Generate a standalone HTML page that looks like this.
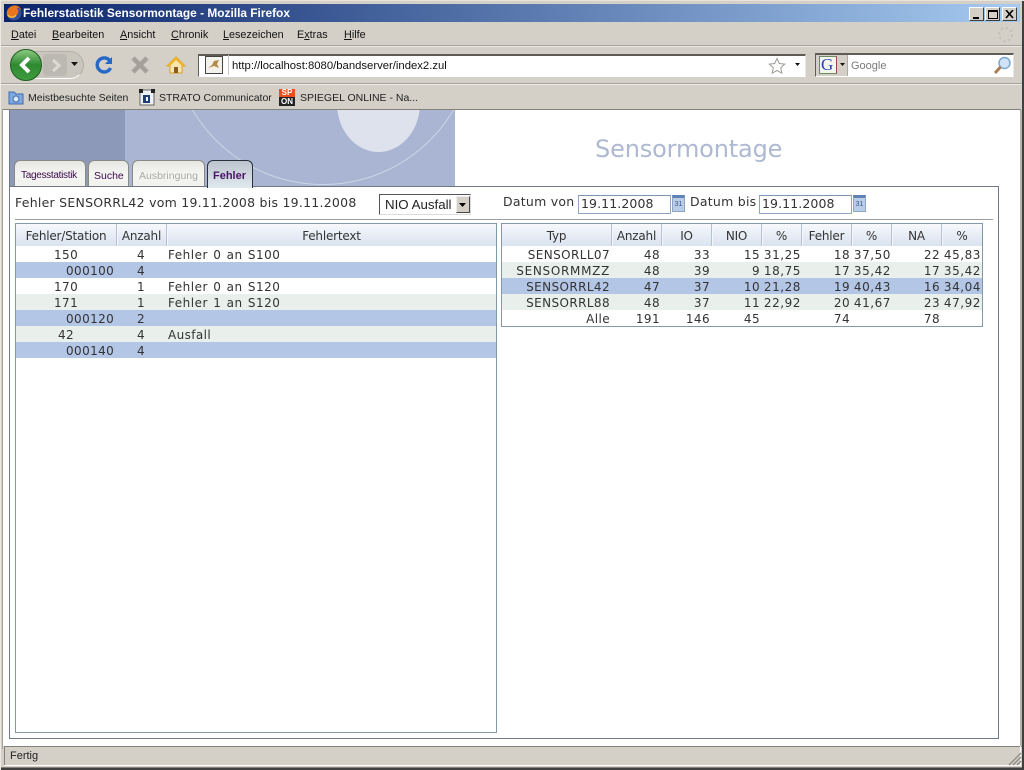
<!DOCTYPE html>
<html><head><meta charset="utf-8"><title>Fehlerstatistik Sensormontage - Mozilla Firefox</title>
<style>
html,body{margin:0;padding:0;background:#d4d0c8;}
body{position:relative;width:1024px;height:770px;overflow:hidden;font-family:"Liberation Sans",sans-serif;}
div,span,svg{position:absolute;box-sizing:border-box;}
.t{white-space:nowrap;line-height:16px;}
.m{font-size:10.8px;color:#111;top:27px;}
.m u{text-decoration:underline;}
.b{font-size:10.5px;color:#222;top:90px;}
.v{font-family:"DejaVu Sans",sans-serif;font-size:12px;color:#333;letter-spacing:.4px;margin-top:1px;}
.w{word-spacing:1px;letter-spacing:.5px;}
.n{letter-spacing:.55px;}
.h{font-size:12px;color:#333;text-align:center;top:228px;font-family:"DejaVu Sans",sans-serif;letter-spacing:-.2px;}
.r{text-align:right;}
.hs{top:224px;height:22px;background:#f4f7fb;border-left:1px solid #b6c2d4;width:2px;}
.tab{top:160px;height:27px;border:1px solid #8a8a84;border-bottom:0;border-radius:6px 6px 0 0;background:linear-gradient(#e6e6e2,#f5f5f2 50%,#f1f1ee);}
.tl{font-size:10.5px;top:168px;}
.dt{top:195px;height:19px;background:#fff;border:1px solid #8ea6c4;border-top-color:#7d95b5;}
.cal{top:195px;width:13px;height:17px;background:#b9cde8;border:1px solid #8ea6c4;border-top:3px solid #5f83b5;font:7px "Liberation Sans",sans-serif;color:#3b5b8c;text-align:center;line-height:13px;}
.wb{top:7px;width:15px;height:14px;background:#d4d0c8;border:1px solid;border-color:#fff #404040 #404040 #fff;}
.d{font-family:"DejaVu Sans",sans-serif;font-size:12.5px;color:#333;}
</style></head><body>
<!-- title bar -->
<div style="left:0;top:0;width:1024px;height:4px;background:#d4d0c8"></div>
<div style="left:4px;top:4px;width:1016px;height:18px;background:linear-gradient(90deg,#0a246a,#a6caf0)"></div>
<svg style="left:5px;top:4px" width="18" height="18" viewBox="0 0 18 18"><circle cx="9" cy="9" r="7.500" fill="#34509c"/><path d="M2 11C1 5 6 1 11 1.500c3 .5 5 3 5.500 5.500-1-2-3-3.500-5-3.500 2 2 2.500 4.500 1 6.500s-5 5-8 3.500C3.500 13.500 2.500 12 2 11z" fill="#e8761c"/><path d="M3 11c2 3 6 3 8 0" stroke="#f8c040" stroke-width="1.500" fill="none"/></svg>
<div class="t" style="left:23px;top:5px;font-size:11.9px;font-weight:bold;color:#fff">Fehlerstatistik Sensormontage - Mozilla Firefox</div>
<div class="wb" style="left:969px"><span style="left:3px;top:9px;width:6px;height:2px;background:#000"></span></div>
<div class="wb" style="left:985px"><span style="left:2px;top:2px;width:10px;height:9px;border:1px solid #000;border-top-width:2px"></span></div>
<div class="wb" style="left:1002px"><svg style="left:2px;top:2px" width="10" height="9"><path d="M1 0l7 8M8 0L1 8" stroke="#000" stroke-width="1.600"/></svg></div>
<!-- menu -->
<div class="t m" style="left:11px"><u>D</u>atei</div>
<div class="t m" style="left:52px"><u>B</u>earbeiten</div>
<div class="t m" style="left:120px"><u>A</u>nsicht</div>
<div class="t m" style="left:171px"><u>C</u>hronik</div>
<div class="t m" style="left:223px"><u>L</u>esezeichen</div>
<div class="t m" style="left:297px">E<u>x</u>tras</div>
<div class="t m" style="left:344px"><u>H</u>ilfe</div>
<svg style="left:997px;top:26px" width="17" height="17"><circle cx="8.500" cy="8.500" r="6.500" fill="none" stroke="#c2bfb8" stroke-width="2.200" stroke-dasharray="2.200 2.900"/></svg>
<div style="left:0;top:45px;width:1024px;height:1px;background:#a5a29b"></div>
<div style="left:0;top:46px;width:1024px;height:1px;background:#eeeae3"></div>
<!-- nav -->
<div style="left:12px;top:51px;width:72px;height:28px;border-radius:14px;background:#c9c6be;border:1px solid #b3b0a8;border-bottom-color:#fff"></div>
<div style="left:43px;top:54px;width:24px;height:22px;border-radius:4px;background:#bcb9b2"></div>
<svg style="left:10px;top:49px" width="33" height="33"><defs><linearGradient id="g" x1="0" y1="0" x2="0" y2="1"><stop offset="0" stop-color="#8fca84"/><stop offset=".5" stop-color="#2d8a30"/><stop offset="1" stop-color="#3f9c3e"/></linearGradient></defs><circle cx="16" cy="16" r="15.500" fill="url(#g)" stroke="#1f5e22"/><path d="M19 9l-7 7 7 7" fill="none" stroke="#fff" stroke-width="4"/></svg>
<svg style="left:49px;top:58px" width="14" height="15"><path d="M4 2l6 5.500-6 5.500" fill="none" stroke="#dddad3" stroke-width="3"/></svg>
<svg style="left:71px;top:62px" width="8" height="5"><path d="M0 0h7L3.500 4z" fill="#111"/></svg>
<svg style="left:95px;top:56px" width="18" height="19"><path d="M15 5A7 7 0 1 0 15.500 12" fill="none" stroke="#2468c8" stroke-width="3.400"/><path d="M10 8h7V1z" fill="#2468c8"/></svg>
<svg style="left:130px;top:55px" width="20" height="20"><path d="M3 3l14 14M17 3L3 17" stroke="#a3a199" stroke-width="4.500"/></svg>
<svg style="left:166px;top:56px" width="20" height="18"><path d="M10 1L1 10h3v7h12v-7h3z" fill="#f5e6b0" stroke="#d8a020"/><path d="M10 1L1 10h3L10 4l6 6h3z" fill="#f0b428"/><rect x="8" y="11" width="4" height="6" fill="#8a5a20"/></svg>
<div style="left:198px;top:54px;width:608px;height:23px;background:#fff;border:1px solid;border-color:#5f5c55 #e8e6e0 #fff #5f5c55;border-top-width:2px"></div>
<div style="left:205px;top:56px;width:18px;height:18px;background:#f3f1ec;border:1px solid #444"></div>
<svg style="left:207px;top:59px" width="14" height="12"><path d="M1 9l4-3 2-4 5-1-2 4 2 4-5-2z" fill="#b48a4a"/></svg>
<div style="left:228px;top:55px;width:1px;height:20px;background:#c8c6c0"></div>
<div class="t" style="left:232px;top:58px;font-size:11.3px;color:#111">http://localhost:8080/bandserver/index2.zul</div>
<svg style="left:768px;top:57px" width="18" height="18"><path d="M9 1.500l2.300 5 5.400.6-4 3.700 1.100 5.400L9 13.500l-4.800 2.700 1.100-5.400-4-3.700 5.400-.6z" fill="#fff" stroke="#9a9a94"/></svg>
<svg style="left:795px;top:63px" width="6" height="4"><path d="M0 0h5L2.500 3z" fill="#111"/></svg>
<div style="left:815px;top:53px;width:199px;height:24px;background:#fff;border:1px solid;border-color:#5f5c55 #e8e6e0 #fff #5f5c55;border-top-width:2px"></div>
<div style="left:816px;top:55px;width:32px;height:21px;background:#d4d0c8;border-right:1px solid #aaa"></div>
<div style="left:819px;top:56px;width:18px;height:18px;background:#f2f6ee;border:1px solid #6c8a5c;border-right-color:#a04050"></div>
<div class="t" style="left:821px;top:56px;font:17px/18px 'Liberation Serif',serif;color:#2a44b0">G</div>
<svg style="left:840px;top:63px" width="6" height="4"><path d="M0 0h5L2.500 3z" fill="#111"/></svg>
<div class="t" style="left:851px;top:58px;font-size:11px;color:#7a7a7a">Google</div>
<svg style="left:993px;top:56px" width="19" height="19"><circle cx="11.500" cy="7" r="5.500" fill="#cfe4f7" stroke="#7fa8cc" stroke-width="1.500"/><path d="M7.500 11l-5.500 6" stroke="#b07a50" stroke-width="3"/></svg>
<div style="left:0;top:83px;width:1024px;height:1px;background:#a5a29b"></div>
<div style="left:0;top:84px;width:1024px;height:1px;background:#f0ede6"></div>
<!-- bookmarks -->
<svg style="left:8px;top:90px" width="16" height="16"><path d="M1 2h5l2 2h7v10H1z" fill="#7ea8e0" stroke="#3f6cb0"/><circle cx="8" cy="9" r="3" fill="#dbe8fa" stroke="#3f6cb0"/></svg>
<div class="t b" style="left:28px">Meistbesuchte Seiten</div>
<svg style="left:139px;top:89px" width="16" height="17"><rect x="1" y="1" width="14" height="15" fill="#eef0f4" stroke="#666"/><rect x="0" y="0" width="4" height="4" fill="#222"/><rect x="12" y="0" width="4" height="4" fill="#222"/><rect x="4" y="6" width="7" height="8" fill="#1c3f78"/><rect x="7" y="8" width="2" height="4" fill="#fff"/></svg>
<div class="t b" style="left:159px">STRATO Communicator</div>
<div style="left:279px;top:89px;width:16px;height:8px;background:#e8501c;color:#fff;font:bold 8px/8px 'Liberation Sans',sans-serif;text-align:center">SP</div>
<div style="left:279px;top:97px;width:16px;height:9px;background:#222;color:#fff;font:bold 8px/9px 'Liberation Sans',sans-serif;text-align:center">ON</div>
<div class="t b" style="left:300px">SPIEGEL ONLINE - Na...</div>
<!-- content -->
<div style="left:3px;top:109px;width:1018px;height:1px;background:#85827b"></div>
<div style="left:3px;top:110px;width:1017px;height:635px;background:#fff"></div>
<div style="left:2px;top:109px;width:1px;height:640px;background:#a5a29b"></div>
<div style="left:9px;top:110px;width:1px;height:629px;background:#6f7884"></div>
<div style="left:1020px;top:110px;width:2px;height:636px;background:#b8b5ad"></div>
<!-- banner -->
<div style="left:10px;top:110px;width:445px;height:76px;background:#a9b5d2;overflow:hidden">
<div style="left:0;top:0;width:115px;height:76px;background:#8d99b9"></div>
<div style="left:327px;top:-55px;width:83px;height:97px;border-radius:50%;background:#dee2ec"></div>
<div style="left:161px;top:-229px;width:304px;height:304px;border-radius:50%;border:1px solid #cdd4e6"></div>
</div>
<!-- tabs -->
<div class="tab" style="left:14px;width:72px"></div>
<div class="tab" style="left:88px;width:41px"></div>
<div class="tab" style="left:132px;width:73px"></div>
<div class="tab" style="left:207px;width:46px;height:28px;border-color:#26323c;background:linear-gradient(#bcc5ce,#cfd8de 55%,#dfe9f0)"></div>
<div class="t tl" style="left:21px;color:#3a0a4a;font-size:10px;letter-spacing:-.3px">Tagesstatistik</div>
<div class="t tl" style="left:94px;color:#3a0a4a">Suche</div>
<div class="t tl" style="left:139px;color:#a9a9a9">Ausbringung</div>
<div class="t tl" style="left:213px;color:#4b1268;font-weight:bold;font-size:11px">Fehler</div>
<div class="t" style="left:595px;top:134px;font:24px/30px 'DejaVu Sans',sans-serif;color:#adb8d2;letter-spacing:-.15px">Sensormontage</div>
<!-- panel -->
<div style="left:9px;top:186px;width:198px;height:1px;background:#6f7884"></div>
<div style="left:253px;top:186px;width:746px;height:1px;background:#6f7884"></div>
<div style="left:998px;top:186px;width:1px;height:553px;background:#6f7884"></div>
<div style="left:9px;top:738px;width:990px;height:1px;background:#6f7884"></div>
<div class="t d" style="left:15px;top:195px;letter-spacing:.25px">Fehler SENSORRL42 vom 19.11.2008 bis 19.11.2008</div>
<div style="left:379px;top:194px;width:92px;height:21px;background:#fff;border:1px solid;border-color:#555 #ddd #ddd #555"></div>
<div class="t" style="left:385px;top:197px;font-size:13.3px;color:#222">NIO Ausfall</div>
<div style="left:456px;top:196px;width:14px;height:17px;background:#d4d0c8;border:1px solid;border-color:#eee #444 #444 #eee"></div>
<svg style="left:459px;top:203px" width="8" height="5"><path d="M0 0h7L3.500 4z" fill="#000"/></svg>
<div class="t d" style="left:503px;top:194px;letter-spacing:.25px">Datum von</div>
<div class="dt" style="left:578px;width:93px"></div>
<div class="t d" style="left:581px;top:196px;letter-spacing:.1px">19.11.2008</div>
<div class="cal" style="left:672px">31</div>
<div class="t d" style="left:690px;top:194px;letter-spacing:.25px">Datum bis</div>
<div class="dt" style="left:759px;width:93px"></div>
<div class="t d" style="left:762px;top:196px;letter-spacing:.1px">19.11.2008</div>
<div class="cal" style="left:853px">31</div>
<div style="left:15px;top:219px;width:978px;height:1px;background:#9aa0a6"></div>
<!-- left table -->
<div style="left:15px;top:223px;width:482px;height:510px;border:1px solid #8299a8;background:#fff"></div>
<div style="left:16px;top:224px;width:480px;height:22px;background:linear-gradient(#f7f9fc,#d9e3f0)"></div>
<div class="hs" style="left:116px"></div><div class="hs" style="left:166px"></div>
<div class="t h" style="left:16px;width:100px">Fehler/Station</div>
<div class="t h" style="left:117px;width:49px">Anzahl</div>
<div class="t h" style="left:167px;width:329px">Fehlertext</div>
<div style="left:16px;top:262px;width:480px;height:16px;background:#b3c6e6"></div>
<div style="left:16px;top:294px;width:480px;height:16px;background:#e9f0ec"></div>
<div style="left:16px;top:310px;width:480px;height:16px;background:#b3c6e6"></div>
<div style="left:16px;top:326px;width:480px;height:16px;background:#e9f0ec"></div>
<div style="left:16px;top:342px;width:480px;height:16px;background:#b3c6e6"></div>
<div class="t v" style="left:54px;top:246px">150</div><div class="t v" style="left:137px;top:246px">4</div><div class="t v w" style="left:168px;top:246px">Fehler 0 an S100</div>
<div class="t v" style="left:66px;top:262px">000100</div><div class="t v" style="left:137px;top:262px">4</div>
<div class="t v" style="left:54px;top:278px">170</div><div class="t v" style="left:137px;top:278px">1</div><div class="t v w" style="left:168px;top:278px">Fehler 0 an S120</div>
<div class="t v" style="left:54px;top:294px">171</div><div class="t v" style="left:137px;top:294px">1</div><div class="t v w" style="left:168px;top:294px">Fehler 1 an S120</div>
<div class="t v" style="left:66px;top:310px">000120</div><div class="t v" style="left:137px;top:310px">2</div>
<div class="t v" style="left:58px;top:326px">42</div><div class="t v" style="left:137px;top:326px">4</div><div class="t v" style="left:168px;top:326px">Ausfall</div>
<div class="t v" style="left:66px;top:342px">000140</div><div class="t v" style="left:137px;top:342px">4</div>
<!-- right table -->
<div style="left:501px;top:223px;width:482px;height:104px;border:1px solid #8299a8;background:#fff"></div>
<div style="left:502px;top:224px;width:480px;height:22px;background:linear-gradient(#f7f9fc,#d9e3f0)"></div>
<div class="hs" style="left:611px"></div><div class="hs" style="left:661px"></div><div class="hs" style="left:711px"></div><div class="hs" style="left:761px"></div><div class="hs" style="left:801px"></div><div class="hs" style="left:851px"></div><div class="hs" style="left:891px"></div><div class="hs" style="left:941px"></div>
<div class="t h" style="left:502px;width:109px">Typ</div>
<div class="t h" style="left:612px;width:49px">Anzahl</div>
<div class="t h" style="left:662px;width:49px">IO</div>
<div class="t h" style="left:712px;width:49px">NIO</div>
<div class="t h" style="left:762px;width:39px">%</div>
<div class="t h" style="left:802px;width:49px">Fehler</div>
<div class="t h" style="left:852px;width:39px">%</div>
<div class="t h" style="left:892px;width:49px">NA</div>
<div class="t h" style="left:942px;width:40px">%</div>
<div style="left:502px;top:262px;width:480px;height:16px;background:#e9f0ec"></div>
<div style="left:502px;top:278px;width:480px;height:16px;background:#b3c6e6"></div>
<div style="left:502px;top:294px;width:480px;height:16px;background:#e9f0ec"></div>
<div class="t v r" style="right:414px;top:246px">SENSORLL07</div><div class="t v r" style="right:364px;top:246px">48</div><div class="t v r" style="right:314px;top:246px">33</div><div class="t v r" style="right:264px;top:246px">15</div><div class="t v r n" style="right:223px;top:246px">31,25</div><div class="t v r" style="right:174px;top:246px">18</div><div class="t v r n" style="right:133px;top:246px">37,50</div><div class="t v r" style="right:84px;top:246px">22</div><div class="t v r n" style="right:43px;top:246px">45,83</div>
<div class="t v r" style="right:414px;top:262px;letter-spacing:.7px">SENSORMMZZ</div><div class="t v r" style="right:364px;top:262px">48</div><div class="t v r" style="right:314px;top:262px">39</div><div class="t v r" style="right:264px;top:262px">9</div><div class="t v r n" style="right:223px;top:262px">18,75</div><div class="t v r" style="right:174px;top:262px">17</div><div class="t v r n" style="right:133px;top:262px">35,42</div><div class="t v r" style="right:84px;top:262px">17</div><div class="t v r n" style="right:43px;top:262px">35,42</div>
<div class="t v r" style="right:414px;top:278px">SENSORRL42</div><div class="t v r" style="right:364px;top:278px">47</div><div class="t v r" style="right:314px;top:278px">37</div><div class="t v r" style="right:264px;top:278px">10</div><div class="t v r n" style="right:223px;top:278px">21,28</div><div class="t v r" style="right:174px;top:278px">19</div><div class="t v r n" style="right:133px;top:278px">40,43</div><div class="t v r" style="right:84px;top:278px">16</div><div class="t v r n" style="right:43px;top:278px">34,04</div>
<div class="t v r" style="right:414px;top:294px">SENSORRL88</div><div class="t v r" style="right:364px;top:294px">48</div><div class="t v r" style="right:314px;top:294px">37</div><div class="t v r" style="right:264px;top:294px">11</div><div class="t v r n" style="right:223px;top:294px">22,92</div><div class="t v r" style="right:174px;top:294px">20</div><div class="t v r n" style="right:133px;top:294px">41,67</div><div class="t v r" style="right:84px;top:294px">23</div><div class="t v r n" style="right:43px;top:294px">47,92</div>
<div class="t v r" style="right:414px;top:310px">Alle</div><div class="t v r" style="right:364px;top:310px">191</div><div class="t v r" style="right:314px;top:310px">146</div><div class="t v r" style="right:264px;top:310px">45</div><div class="t v r" style="right:174px;top:310px">74</div><div class="t v r" style="right:84px;top:310px">78</div>
<!-- status -->
<div style="left:3px;top:745px;width:1017px;height:1px;background:#fff"></div>
<div style="left:4px;top:746px;width:1018px;height:21px;background:#d4d0c8"></div>
<div style="left:4px;top:746px;width:1018px;height:1px;background:#85827b"></div>
<div style="left:4px;top:746px;width:1px;height:20px;background:#85827b"></div>
<div style="left:1020px;top:746px;width:1px;height:20px;background:#fff"></div>
<div style="left:4px;top:765px;width:1017px;height:1px;background:#fff"></div>
<div class="t" style="left:10px;top:748px;font-size:11px;color:#222">Fertig</div>
<svg style="left:1008px;top:752px" width="14" height="14"><path d="M13 1L1 13M13 5L5 13M13 9L9 13" stroke="#8a877f" stroke-width="1.300"/></svg>
<div style="left:0;top:767px;width:1024px;height:1px;background:#85827b"></div>
<div style="left:0;top:768px;width:1024px;height:2px;background:#404040"></div>
<div style="left:1022px;top:0;width:2px;height:770px;background:#404040"></div>
<div style="left:0;top:0;width:1024px;height:1px;background:#e8e4dc"></div>
<div style="left:0;top:0;width:1px;height:770px;background:#eeeae3"></div>
</body></html>
